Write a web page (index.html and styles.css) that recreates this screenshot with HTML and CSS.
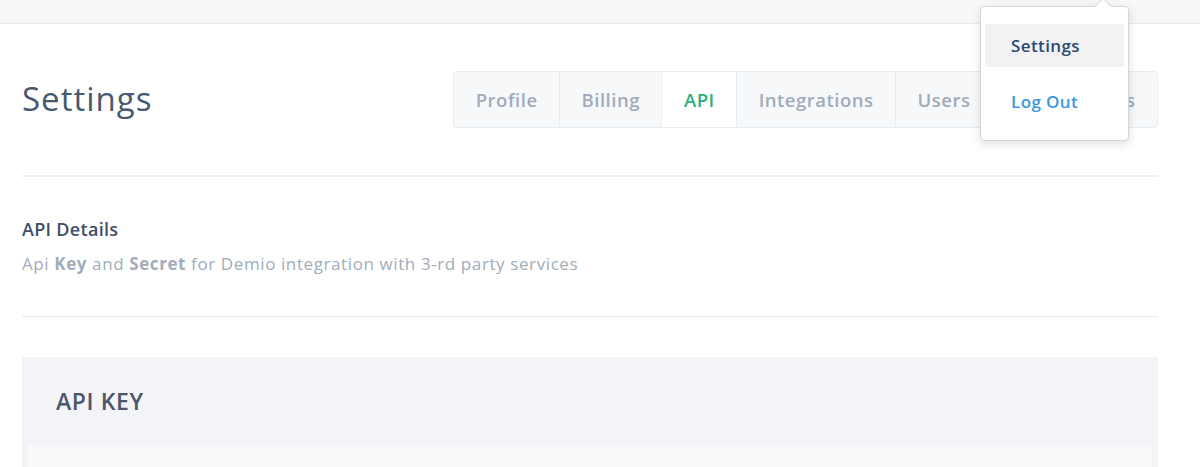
FILE: index.html
```html
<!DOCTYPE html>
<html>
<head>
<meta charset="utf-8">
<link rel="stylesheet" href="styles.css">
</head>
<body>
<div class="topbar"></div>
<main class="page">
  <header class="head">
    <h1 class="title">Settings</h1>
    <nav class="tabs">
      <a class="tab">Profile</a>
      <a class="tab">Billing</a>
      <a class="tab active">API</a>
      <a class="tab">Integrations</a>
      <a class="tab">Users</a>
      <a class="tab">Notifications</a>
    </nav>
  </header>
  <hr class="rule">
  <section class="details">
    <h2 class="details-title">API Details</h2>
    <p class="details-sub">Api <b>Key</b> and <b>Secret</b> for Demio integration with 3-rd party services</p>
  </section>
  <hr class="rule thin">
  <section class="panel">
    <h3 class="panel-title">API KEY</h3>
    <div class="panel-body"></div>
  </section>
</main>
<div class="menu">
  <span class="menu-arrow"></span>
  <a class="menu-item current">Settings</a>
  <a class="menu-item logout">Log Out</a>
</div>
</body>
</html>
```
FILE: styles.css
```css
* { box-sizing: border-box; }
html, body { margin: 0; padding: 0; background: #fff; height: 467px; overflow: hidden; }
body { font-family: "Open Sans", "Noto Sans", sans-serif; position: relative; }

.topbar { height: 24px; background: #f7f7f8; border-bottom: 1px solid #e9e9f0; }

.page { padding: 0 42px 0 22px; }

.head { display: flex; align-items: center; justify-content: space-between; height: 151px; }
.title { margin: 0 0 2px; font-size: 33px; font-weight: 400; color: #475870; letter-spacing: 1px; }

.tabs { display: flex; border: 1px solid #e8ebf0; border-radius: 4px; background: #f7f8fa; height: 57px; }
.tab { display: flex; align-items: center; padding: 0 21.5px; font-size: 18.5px; font-weight: 600; color: #a0abbb; letter-spacing: 0.5px; border-left: 1px solid #e8ebf0; }
.tab:first-child { border-left: none; }
.tab.active { background: #fff; color: #2cb07d; }

.rule { border: none; border-top: 2px solid #eceff3; margin: 0; }
.rule.thin { border-top: 1px solid #e6e9ee; }

.details { padding: 40px 0 40px; }
.details-title { margin: 0; font-size: 18px; font-weight: 600; color: #3f4f67; line-height: 24px; letter-spacing: 0.3px; }
.details-sub { margin: 11px 0 0; font-size: 17px; color: #a2acba; line-height: 24px; letter-spacing: 0.6px; }
.details-sub b { font-weight: 700; }

.panel { margin-top: 40px; background: #f3f4f7; padding: 0 6px; height: 110px; display: flex; flex-direction: column; }
.panel-title { margin: 0; padding: 29px 0 0 28px; height: 88px; font-size: 23px; font-weight: 600; color: #4d5668; line-height: 30px; letter-spacing: 0.6px; }
.panel-body { background: #f8f9fa; flex: 1; }

.menu { position: absolute; left: 980px; top: 6px; width: 149px; height: 135px; background: #fff; border: 1px solid #d5d6da; border-radius: 4px; box-shadow: 0 3px 10px rgba(0,0,0,0.13); padding: 17px 4px 0; display: flex; flex-direction: column; }
.menu-arrow { position: absolute; top: -7px; left: 116px; width: 12px; height: 12px; background: #fff; border-left: 1px solid #d5d6da; border-top: 1px solid #d5d6da; transform: rotate(45deg); }
.menu-item { display: flex; align-items: center; height: 43px; padding-left: 26px; font-size: 17px; font-weight: 600; letter-spacing: 0.4px; }
.menu-item.current { background: #f2f2f3; color: #2b4b70; }
.menu-item.logout { color: #3c97e0; height: 68px; }
```
